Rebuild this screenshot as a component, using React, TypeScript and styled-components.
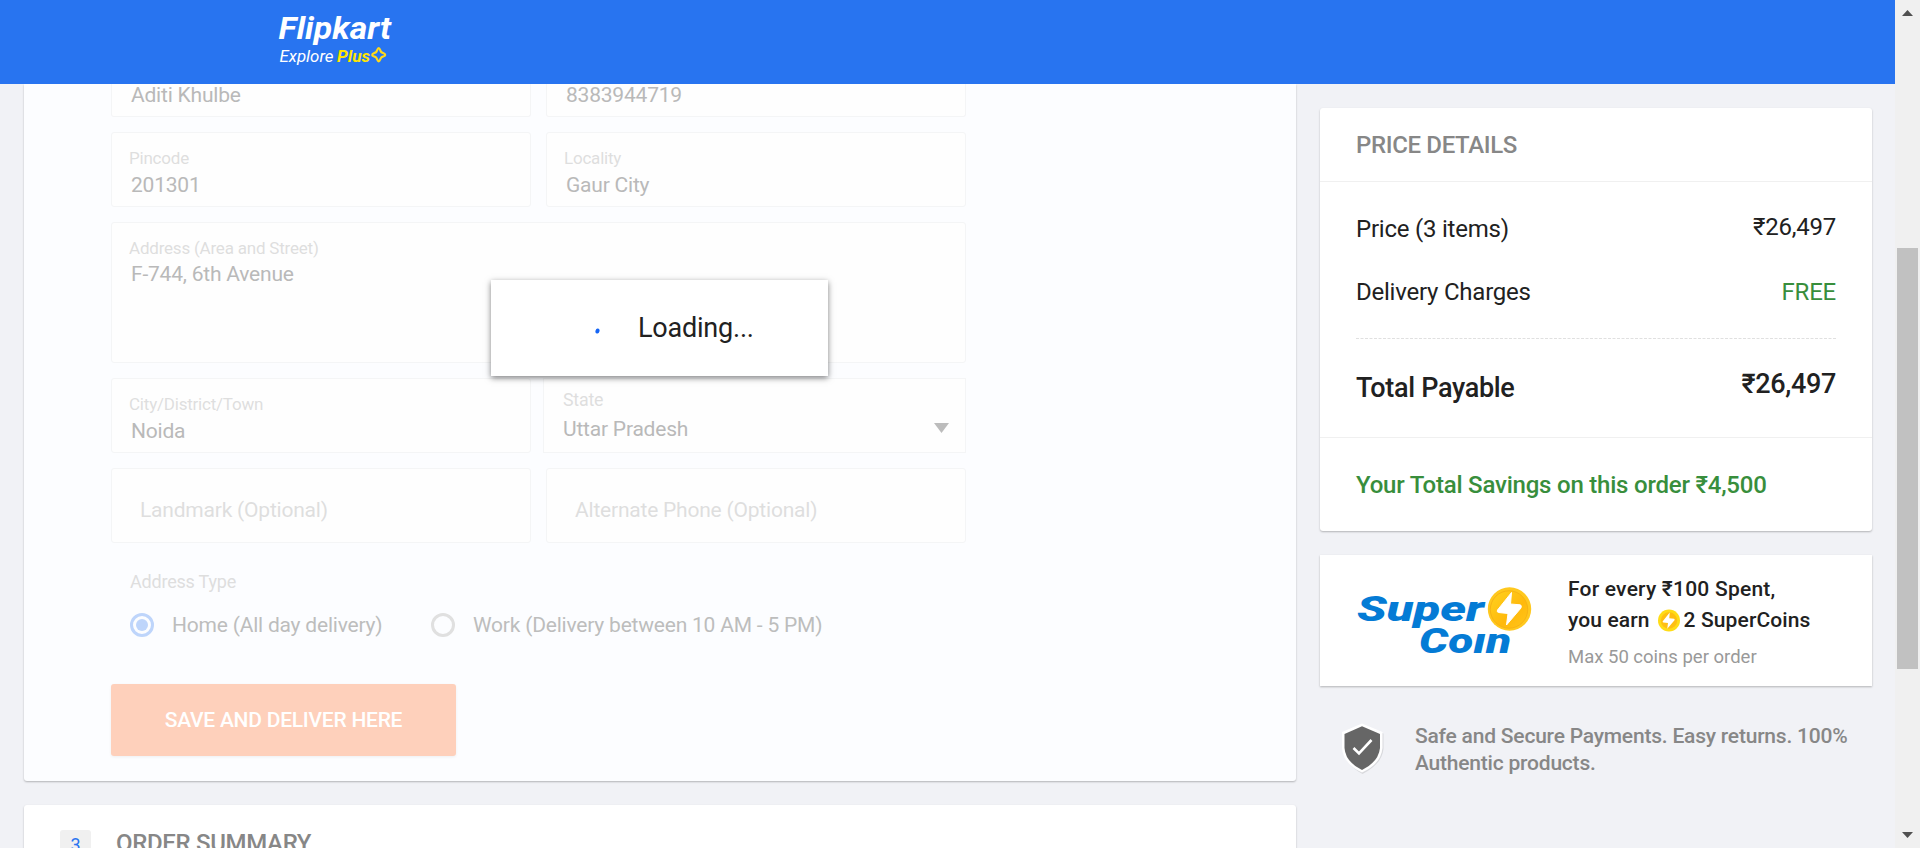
import React from 'react';
import styled, { createGlobalStyle, css } from 'styled-components';

const Global = createGlobalStyle`
  * { box-sizing: border-box; }
  body { margin: 0; background: #f1f2f6; font-family: Roboto, "Liberation Sans", sans-serif; color: #212121; letter-spacing: -0.21px; }
`;

const Screen = styled.div`
  display: grid;
  grid-template-columns: 1895px 25px;
  height: 848px;
  overflow: hidden;
  position: relative;
`;
const Page = styled.div`
  display: flex;
  flex-direction: column;
  overflow: hidden;
`;
const Header = styled.header`
  flex: 0 0 84px;
  background: #2874f0;
  padding-left: 270px;
  letter-spacing: 0;
`;
const Columns = styled.div`
  display: grid;
  grid-template-columns: 1272px 552px;
  column-gap: 24px;
  padding-left: 24px;
  flex: 1;
  min-height: 0;
  overflow: hidden;
`;
const cardShadow = css`
  box-shadow: 0 1px 2px 0 rgba(0, 0, 0, 0.26);
`;

/* ---- address form ---- */
const FormCard = styled.section`
  ${cardShadow}
  height: 697px;
  padding-left: 87px;
  background: #fcfdff;
  border-radius: 0 0 3px 3px;
`;
const Fields = styled.div`
  width: 855px;
  display: flex;
  flex-direction: column;
  gap: 15px;
`;
const FieldRow = styled.div`
  display: flex;
  justify-content: space-between;
`;
const Field = styled.div<{ $w?: number; $h?: number; $kind?: 'cut' | 'select' | 'empty' }>`
  width: ${p => p.$w ?? 420}px;
  height: ${p => p.$h ?? 75}px;
  padding: 15px 17px 0;
  background: #fefefe;
  border: 1px solid #f4f5f6;
  border-radius: 3px;
  ${p => p.$kind === 'cut' && css`
    padding-top: 0;
    border-top: 0;
    border-radius: 0 0 3px 3px;
  `}
  ${p => p.$kind === 'select' && css`
    padding: 11px 16px 0 19px;
    border-radius: 0;
  `}
  ${p => p.$kind === 'empty' && css`padding: 29px 28px 0;`}
`;
const Label = styled.div<{ $large?: boolean }>`
  font-size: ${p => (p.$large ? 17.8 : 17)}px;
  line-height: 20px;
  color: #dedede;
  white-space: nowrap;
`;
const Value = styled.div<{ $top?: number; $lh?: number; $muted?: boolean; $indent?: number }>`
  margin: ${p => p.$top ?? 5}px 0 0 ${p => p.$indent ?? 2}px;
  font-size: 21px;
  line-height: ${p => p.$lh ?? 24}px;
  color: ${p => (p.$muted ? '#dedede' : '#b9b9b9')};
  white-space: nowrap;
`;
const SelectLine = styled.div`
  display: flex;
  justify-content: space-between;
  align-items: center;
  margin-top: 7px;
`;
const Caret = styled.svg`
  margin-bottom: 3px;
`;
const AddressType = styled.div`
  margin: 28px 0 0 19px;
  font-size: 18px;
  line-height: 22px;
  color: #dedede;
`;
const Radios = styled.div`
  display: flex;
  margin: 20px 0 0 19px;
`;
const RadioOption = styled.div<{ $w: number }>`
  display: flex;
  align-items: center;
  gap: 18px;
  width: ${p => p.$w}px;
  height: 24px;
  font-size: 21px;
  line-height: 24px;
  color: #bdbdbd;
  white-space: nowrap;
`;
const Radio = styled.span<{ $on?: boolean }>`
  flex: none;
  display: grid;
  place-items: center;
  width: 24px;
  height: 24px;
  border: 3px solid ${p => (p.$on ? '#bed5fb' : '#e0e0e0')};
  border-radius: 50%;
  &::after {
    content: '';
    width: 12px;
    height: 12px;
    border-radius: 50%;
    background: ${p => (p.$on ? '#bed5fb' : 'transparent')};
  }
`;
const SaveButton = styled.button`
  display: block;
  width: 345px;
  height: 72px;
  margin-top: 47px;
  padding: 0 0 1px;
  border: 0;
  border-radius: 3px;
  background: #fed0bb;
  box-shadow: 0 1px 3px rgba(0, 0, 0, 0.06);
  color: #fff;
  font: 500 21px/24px Roboto, sans-serif;
  letter-spacing: -0.25px;
`;
const SummaryCard = styled.section`
  ${cardShadow}
  display: flex;
  margin-top: 24px;
  height: 72px;
  padding: 25px 36px 0;
  background: #fff;
  border-radius: 3px 3px 0 0;
`;
const Step = styled.span`
  width: 31px;
  height: 27px;
  border-radius: 3px;
  background: #f0f0f0;
  color: #2874f0;
  font-size: 18px;
  line-height: 30px;
  text-align: center;
`;
const SummaryTitle = styled.span`
  margin-left: 25px;
  font-size: 24px;
  font-weight: 500;
  letter-spacing: -0.33px;
  line-height: 26px;
  color: #878787;
`;

/* ---- price column ---- */
const Side = styled.aside`
  padding-top: 24px;
`;
const PriceCard = styled.section`
  ${cardShadow}
  height: 423px;
  background: #fff;
  border-radius: 3px;
`;
const PriceHead = styled.h2`
  margin: 0;
  height: 74px;
  padding-left: 36px;
  border-bottom: 1px solid #f0f0f0;
  font-size: 24px;
  font-weight: 500;
  letter-spacing: -0.35px;
  line-height: 75px;
  color: #878787;
`;
const PriceBody = styled.div`
  height: 256px;
  padding: 33px 36px 0;
  border-bottom: 1px solid #f0f0f0;
`;
const PriceRow = styled.div<{ $gap?: number; $total?: boolean }>`
  display: flex;
  justify-content: space-between;
  margin-top: ${p => p.$gap ?? 0}px;
  font-size: ${p => (p.$total ? 27 : 24)}px;
  font-weight: ${p => (p.$total ? 500 : 400)};
  letter-spacing: ${p => (p.$total ? -0.32 : -0.23)}px;
  line-height: 28px;
`;
const Amount = styled.span<{ $lift?: number; $free?: boolean }>`
  margin-top: -${p => p.$lift ?? 0}px;
  color: ${p => (p.$free ? '#388e3c' : '#212121')};
`;
const Dashes = styled.svg`
  display: block;
  margin-top: 32px;
`;
const Savings = styled.div`
  padding-left: 36px;
  font-size: 24px;
  font-weight: 500;
  line-height: 94px;
  color: #388e3c;
`;
const CoinCard = styled.section`
  ${cardShadow}
  display: flex;
  margin-top: 24px;
  height: 131px;
  padding-left: 36px;
  background: #fff;
  letter-spacing: 0;
`;
const CoinText = styled.div`
  margin: 19px 0 0 36px;
  font-size: 21px;
  font-weight: 500;
  line-height: 31px;
  white-space: nowrap;
`;
const CoinLine = styled.div<{ $spacing: number }>`
  display: flex;
  align-items: center;
  letter-spacing: ${p => p.$spacing}px;
`;
const SmallCoinIcon = styled.svg`
  margin: 0 4px 0 8px;
`;
const CoinNote = styled.div`
  margin-top: 9px;
  font-size: 18.5px;
  font-weight: 400;
  line-height: 24px;
  color: #999;
`;
const Safe = styled.div`
  display: flex;
  margin: 35px 0 0 20px;
`;
const SafeText = styled.p`
  margin: 2px 0 0 29px;
  width: 450px;
  font-size: 21px;
  font-weight: 500;
  line-height: 27px;
  color: #878787;
`;

/* ---- scrollbar and modal ---- */
const Scrollbar = styled.div`
  display: flex;
  flex-direction: column;
  align-items: center;
  justify-content: space-between;
  background: #f0f0f0;
  padding: 10px 0;
`;
const Thumb = styled.div`
  width: 21px;
  height: 421px;
  margin: 232px 0 auto;
  background: #c1c1c1;
`;
const Modal = styled.div`
  position: absolute;
  left: 491px;
  top: 280px;
  width: 337px;
  height: 96px;
  display: flex;
  align-items: center;
  padding-left: 104px;
  background: #fff;
  box-shadow: 0 2px 6px rgba(0, 0, 0, 0.5);
  font-size: 27px;
  line-height: 32px;
`;
const Spinner = styled.svg`
  margin: 6px 38px 0 0;
`;

const Logo = () => (
  <svg width="130" height="72" viewBox="270 0 130 72" fontFamily="Roboto, sans-serif" fontStyle="italic">
    <text x="278.5" y="39.2" fontSize="32" fontWeight="700" fill="#fff" textLength="112.5" lengthAdjust="spacingAndGlyphs">Flipkart</text>
    <text x="279.5" y="62" fontSize="17" fill="#fff" textLength="54" lengthAdjust="spacingAndGlyphs">Explore</text>
    <text x="337" y="62" fontSize="17" fontWeight="700" fill="#ffe500" textLength="33" lengthAdjust="spacingAndGlyphs">Plus</text>
    <path d="M378.7 48.2C380 48.2 380.2 51 381.3 52.1C382.3 53.2 385.2 53.3 385.2 54.9C385.2 56.3 382.3 56.5 381.3 57.5C380.2 58.6 380 61.4 378.7 61.4C377.4 61.4 377.2 58.6 376.1 57.5C375 56.5 372.2 56.3 372.2 54.9C372.2 53.3 375 53.2 376.1 52.1C377.2 51 377.4 48.2 378.7 48.2Z" fill="none" stroke="#ffd91a" strokeWidth="2.2" />
  </svg>
);

const Bolt = 'M23.500 6 9.500 23.500Q8.500 25.500 10.600 26L20 27 18.500 38.500 33 21.500Q34 18.500 32 18.300L22.500 17.500Z';

const SuperCoinLogo = () => (
  <svg width="176" height="131" viewBox="1356 555 176 131" fontFamily="Roboto, sans-serif" fontStyle="italic" fontWeight="900">
    <defs>
      <linearGradient id="coin" x1="0" y1="0" x2="1" y2="1">
        <stop offset="0" stopColor="#ffd21f" />
        <stop offset=".6" stopColor="#ffb90c" />
        <stop offset="1" stopColor="#ffc61a" />
      </linearGradient>
    </defs>
    <text x="1357" y="621.2" fontSize="34.5" fill="#047bd5" textLength="127" lengthAdjust="spacingAndGlyphs">Super</text>
    <text x="1419" y="653" fontSize="35.5" fill="#047bd5" textLength="92" lengthAdjust="spacingAndGlyphs">Coın</text>
    <circle cx="1509.5" cy="609" r="21.7" fill="#ffc81e" />
    <circle cx="1509" cy="609.5" r="18.7" fill="url(#coin)" stroke="#f7b314" strokeWidth="1" />
    <path d={Bolt} transform="translate(1488 586.5)" fill="#fff" stroke="#fff" strokeLinejoin="round" />
  </svg>
);

const SmallCoin = () => (
  <SmallCoinIcon width="22" height="23" viewBox="0 0 44 44">
    <circle cx="22" cy="22" r="22" fill="#ffdc16" />
    <circle cx="22" cy="22" r="16.5" fill="#ffbf12" />
    <path d={Bolt} fill="#fff" />
  </SmallCoinIcon>
);

const Shield = () => (
  <svg width="46" height="54" viewBox="0 0 46 54">
    <path d="M22.5 4.5 43.5 12.5V28Q42 43 22.5 53Q4 43 3 28V12.5Z" fill="#000" opacity=".1" />
    <path d="M22 2.5 42.5 11V27Q41 43 22 51.5Q3 43 2 27V11Z" fill="#fff" />
    <path d="M22 5.2 40 13V27Q38.5 41 22 49Q5.500 41 4.500 27V13Z" fill="#666" />
    <path d="M13.500 27 19 32.500 31.500 19" fill="none" stroke="#fff" strokeWidth="2.600" />
  </svg>
);

const Arrow = ({ up }: { up?: boolean }) => (
  <svg width="11" height="6" viewBox="0 0 11 6">
    <path d={up ? 'M0 6 5.500 0 11 6Z' : 'M0 0 5.500 6 11 0Z'} fill="#505050" />
  </svg>
);

export default function App() {
  return (
    <Screen>
      <Global />
      <Page>
        <Header><Logo /></Header>
        <Columns>
          <main>
            <FormCard>
              <Fields>
                <FieldRow>
                  <Field $h={33} $kind="cut"><Value $top={0} $lh={22}>Aditi Khulbe</Value></Field>
                  <Field $h={33} $kind="cut"><Value $top={0} $lh={22}>8383944719</Value></Field>
                </FieldRow>
                <FieldRow>
                  <Field><Label>Pincode</Label><Value>201301</Value></Field>
                  <Field><Label>Locality</Label><Value>Gaur City</Value></Field>
                </FieldRow>
                <Field $w={855} $h={141}>
                  <Label>Address (Area and Street)</Label>
                  <Value $top={4}>F-744, 6th Avenue</Value>
                </Field>
                <FieldRow>
                  <Field><Label>City/District/Town</Label><Value>Noida</Value></Field>
                  <Field $w={423} $kind="select">
                    <Label $large>State</Label>
                    <SelectLine>
                      <Value $top={0} $indent={0}>Uttar Pradesh</Value>
                      <Caret width="15" height="10" viewBox="0 0 15 10"><path d="M0 0H15L7.500 10Z" fill="#bcbcbc" /></Caret>
                    </SelectLine>
                  </Field>
                </FieldRow>
                <FieldRow>
                  <Field $kind="empty"><Value $top={0} $indent={0} $muted>Landmark (Optional)</Value></Field>
                  <Field $kind="empty"><Value $top={0} $indent={0} $muted>Alternate Phone (Optional)</Value></Field>
                </FieldRow>
              </Fields>
              <AddressType>Address Type</AddressType>
              <Radios>
                <RadioOption $w={301}><Radio $on />Home (All day delivery)</RadioOption>
                <RadioOption $w={420}><Radio />Work (Delivery between 10 AM - 5 PM)</RadioOption>
              </Radios>
              <SaveButton>SAVE AND DELIVER HERE</SaveButton>
            </FormCard>
            <SummaryCard>
              <Step>3</Step>
              <SummaryTitle>ORDER SUMMARY</SummaryTitle>
            </SummaryCard>
          </main>
          <Side>
            <PriceCard>
              <PriceHead>PRICE DETAILS</PriceHead>
              <PriceBody>
                <PriceRow><span>Price (3 items)</span><Amount $lift={2}>₹26,497</Amount></PriceRow>
                <PriceRow $gap={35}><span>Delivery Charges</span><Amount $free>FREE</Amount></PriceRow>
                <Dashes width="480" height="1"><path d="M0 .5H480" stroke="#e0e0e0" strokeDasharray="3 1.500" /></Dashes>
                <PriceRow $gap={35} $total><span>Total Payable</span><Amount $lift={4}>₹26,497</Amount></PriceRow>
              </PriceBody>
              <Savings>Your Total Savings on this order ₹4,500</Savings>
            </PriceCard>
            <CoinCard>
              <SuperCoinLogo />
              <CoinText>
                <CoinLine $spacing={0.22}>For every ₹100 Spent,</CoinLine>
                <CoinLine $spacing={0.12}>you earn<SmallCoin />2 SuperCoins</CoinLine>
                <CoinNote>Max 50 coins per order</CoinNote>
              </CoinText>
            </CoinCard>
            <Safe>
              <Shield />
              <SafeText>Safe and Secure Payments. Easy returns. 100% Authentic products.</SafeText>
            </Safe>
          </Side>
        </Columns>
      </Page>
      <Scrollbar>
        <Arrow up />
        <Thumb />
        <Arrow />
      </Scrollbar>
      <Modal>
        <Spinner width="5" height="6" viewBox="0 0 5 6"><ellipse cx="2.500" cy="3" rx="2" ry="2.600" fill="#1565f5" transform="rotate(15 2.500 3)" /></Spinner>
        Loading...
      </Modal>
    </Screen>
  );
}
